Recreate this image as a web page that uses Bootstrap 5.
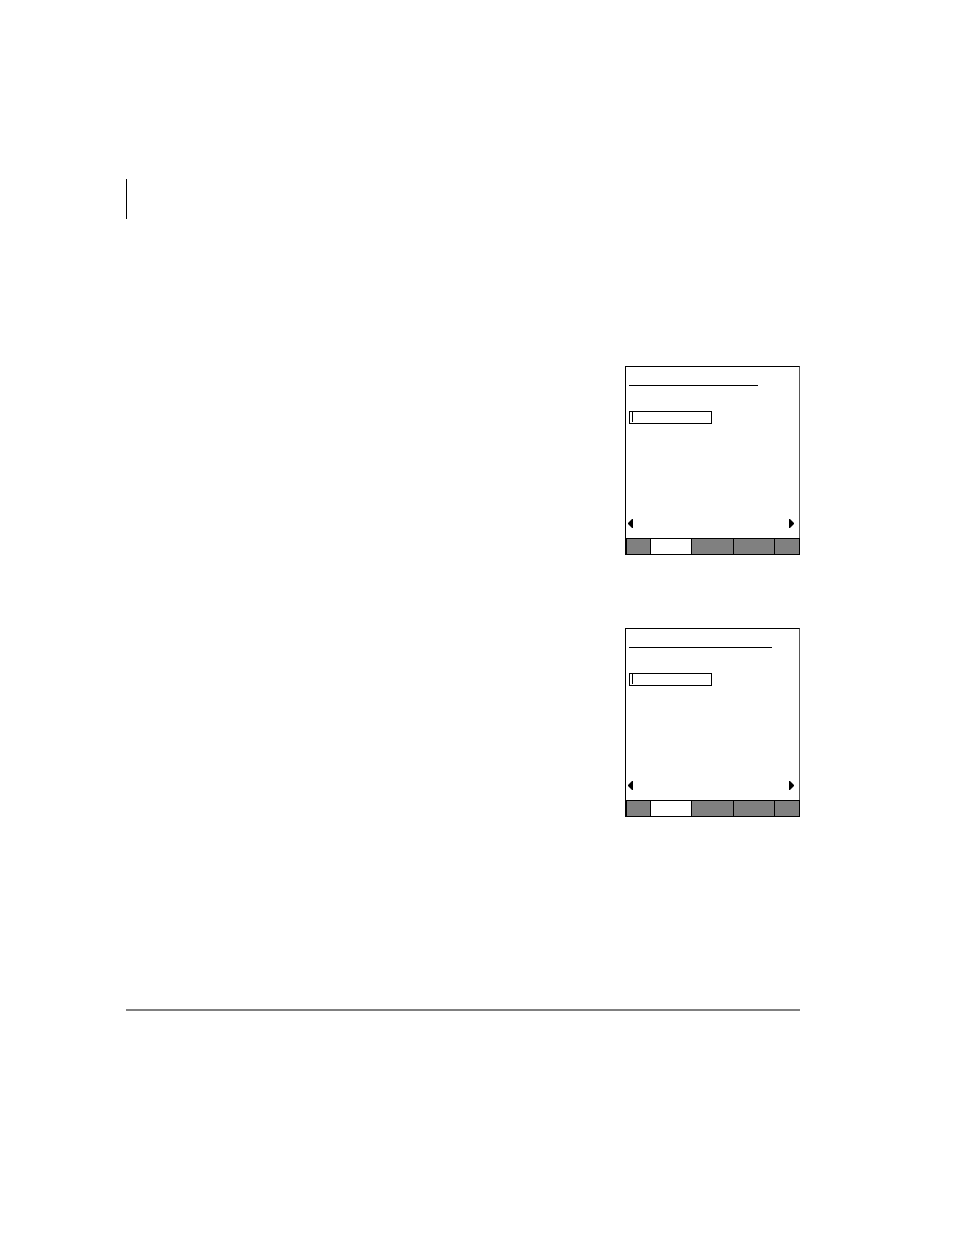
<!DOCTYPE html>
<html lang="en">
<head>
<meta charset="utf-8">
<meta name="viewport" content="width=device-width, initial-scale=1">
<title>Manual page</title>
<link rel="stylesheet" href="https://cdn.jsdelivr.net/npm/bootstrap@5.3.0/dist/css/bootstrap.min.css">
<style>
  body { font-family: "Liberation Sans", Arial, sans-serif; background: #fff; }
  .sheet { padding: 179px 154px 224px 126px; }
  .change-bar { height: 40px; border-left: 1px solid #000; }
  .screens { gap: 73px; margin-top: 147px; }
  .screen { width: 175px; height: 189px; border: 1px solid #000; border-right-color: #555; }
  .title-rule { width: 129px; height: 19px; margin-left: 3px; border-bottom: 1px solid #000; }
  .title-rule.wide { width: 143px; }
  /* Entry field with its text cursor */
  .entry {
    width: 83px; height: 13px; margin: 25px 0 0 3px; padding: 0 4px;
    border: 1px solid #000; border-radius: 0; font-size: 10px;
    background: linear-gradient(#000, #000) 2px 0 / 1px 10px no-repeat #fff;
  }
  .arrows { padding: 0 5px 10px 2px; }
  .arrow { width: 5px; height: 9px; }
  .tabs { height: 17px; margin: 0 -1px -1px 0; background: #000; padding: 1px 1px 1px 1px; gap: 1px; display: grid; grid-template-columns: 23fr 40fr 41fr 40fr 24fr; }
  .tab { background: #808080; }
  .tab.current { background: #fff; }
  .foot-rule { margin-top: 192px; border-top: 2px solid #808080; }
</style>
</head>
<body>
<main class="sheet">
  <div class="change-bar"></div>
  <div class="screens d-flex flex-column align-items-end">
    <section class="screen d-flex flex-column" aria-label="First screen">
      <div class="title-rule"></div>
      <input class="entry" type="text" aria-label="Entry">
      <div class="arrows d-flex justify-content-between mt-auto">
        <button class="btn border-0 p-0 d-flex" type="button" aria-label="Previous"><svg class="arrow" viewBox="0 0 5 9"><path d="M5 0H4L0 4v1l4 4h1z"/></svg></button>
        <button class="btn border-0 p-0 d-flex" type="button" aria-label="Next"><svg class="arrow" viewBox="0 0 5 9"><path d="M0 0h1l4 4v1L1 9H0z"/></svg></button>
      </div>
      <div class="tabs">
        <button class="tab border-0 p-0" type="button" aria-label="Tab 1"></button>
        <button class="tab current border-0 p-0" type="button" aria-label="Tab 2"></button>
        <button class="tab border-0 p-0" type="button" aria-label="Tab 3"></button>
        <button class="tab border-0 p-0" type="button" aria-label="Tab 4"></button>
        <button class="tab border-0 p-0" type="button" aria-label="Tab 5"></button>
      </div>
    </section>
    <section class="screen d-flex flex-column" aria-label="Second screen">
      <div class="title-rule wide"></div>
      <input class="entry" type="text" aria-label="Entry">
      <div class="arrows d-flex justify-content-between mt-auto">
        <button class="btn border-0 p-0 d-flex" type="button" aria-label="Previous"><svg class="arrow" viewBox="0 0 5 9"><path d="M5 0H4L0 4v1l4 4h1z"/></svg></button>
        <button class="btn border-0 p-0 d-flex" type="button" aria-label="Next"><svg class="arrow" viewBox="0 0 5 9"><path d="M0 0h1l4 4v1L1 9H0z"/></svg></button>
      </div>
      <div class="tabs">
        <button class="tab border-0 p-0" type="button" aria-label="Tab 1"></button>
        <button class="tab current border-0 p-0" type="button" aria-label="Tab 2"></button>
        <button class="tab border-0 p-0" type="button" aria-label="Tab 3"></button>
        <button class="tab border-0 p-0" type="button" aria-label="Tab 4"></button>
        <button class="tab border-0 p-0" type="button" aria-label="Tab 5"></button>
      </div>
    </section>
  </div>
  <div class="foot-rule"></div>
</main>
<script src="https://cdn.jsdelivr.net/npm/bootstrap@5.3.0/dist/js/bootstrap.bundle.min.js"></script>
</body>
</html>
